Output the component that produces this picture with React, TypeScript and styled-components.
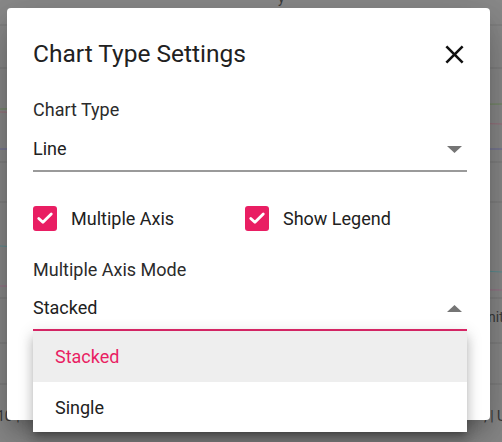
import React from "react";
import styled, { createGlobalStyle } from "styled-components";

const Global = createGlobalStyle`
  html, body { margin: 0; padding: 0; background: #8a8a8a; }
  body { font-family: Roboto, "Noto Sans", "Liberation Sans", sans-serif; }
  * { box-sizing: border-box; }
`;

const Page = styled.div`
  position: relative;
  width: 502px;
  height: 442px;
  overflow: hidden;
  background: #8a8a8a;
`;

const ChartCanvas = styled.svg`
  position: absolute;
  inset: 0;
  width: 502px;
  height: 442px;
`;

const Backdrop = styled.div`
  position: absolute;
  inset: 0;
  padding: 8px 0 0 7px;
`;

const Dialog = styled.div`
  width: 483px;
  height: 412px;
  background: #fff;
  border-radius: 4px;
  box-shadow: 0 11px 15px -7px rgba(0,0,0,0.2), 0 24px 38px 3px rgba(0,0,0,0.14), 0 9px 46px 8px rgba(0,0,0,0.12);
  padding: 26px 24px 0 26px;
  display: flex;
  flex-direction: column;
`;

const TitleRow = styled.div`
  height: 40px;
  display: flex;
  align-items: center;
  justify-content: space-between;
`;

const Title = styled.h2`
  margin: 0;
  font-size: 24.5px;
  line-height: 32px;
  font-weight: 400;
  color: #212121;
`;

const CloseButton = styled.button`
  width: 32px;
  height: 32px;
  margin-right: -4px;
  border: none;
  background: transparent;
  padding: 0;
  display: flex;
  align-items: center;
  justify-content: center;
  color: #111;
`;

const Field = styled.div<{ $top: number }>`
  position: relative;
  margin-top: ${(p) => p.$top}px;
  width: 434px;
`;

const Label = styled.div`
  height: 24px;
  line-height: 24px;
  font-size: 18px;
  color: #2b2b2b;
`;

const SelectBox = styled.div<{ $focused?: boolean }>`
  margin-top: ${(p) => (p.$focused ? 14 : 15)}px;
  height: 35px;
  padding-bottom: 9px;
  display: flex;
  align-items: center;
  justify-content: space-between;
  border-bottom: 2px solid ${(p) => (p.$focused ? "#e0286a" : "#9a9a9a")};
  font-size: 18px;
  color: #212121;
`;

const Value = styled.span`
  line-height: 24px;
`;

const Arrow = styled.svg`
  width: 15px;
  height: 7px;
  margin-right: 5px;
  flex: none;
`;

const CheckRow = styled.div`
  margin-top: 33px;
  height: 26px;
  display: grid;
  grid-template-columns: 212px 1fr;
  align-items: center;
`;

const CheckItem = styled.label`
  display: flex;
  align-items: center;
  gap: 14px;
  font-size: 18px;
  color: #212121;
`;

const Box = styled.span`
  width: 24px;
  height: 25px;
  border-radius: 3px;
  background: #e91e63;
  display: flex;
  align-items: center;
  justify-content: center;
`;

const Menu = styled.ul`
  position: absolute;
  left: 0;
  top: 100%;
  width: 434px;
  margin: 0;
  padding: 0;
  list-style: none;
  background: #fff;
  box-shadow: 0 5px 5px -3px rgba(0,0,0,0.2), 0 8px 10px 1px rgba(0,0,0,0.14), 0 3px 14px 2px rgba(0,0,0,0.12);
  z-index: 2;
`;

const MenuItem = styled.li<{ $selected?: boolean; $h: number }>`
  height: ${(p) => p.$h}px;
  padding: 0 22px;
  display: flex;
  align-items: center;
  font-size: 18px;
  background: ${(p) => (p.$selected ? "#eeeeee" : "#fff")};
  color: ${(p) => (p.$selected ? "#e91e63" : "#212121")};
`;

const DropArrow = ({ up }: { up?: boolean }) => (
  <Arrow viewBox="0 0 15 7">
    {up ? <path d="M0 7 L7.5 0 L15 7 Z" fill="#757575" /> : <path d="M0 0 L15 0 L7.5 7 Z" fill="#757575" />}
  </Arrow>
);

const Check = () => (
  <svg width="20" height="20" viewBox="0 0 24 24">
    <path d="M4.5 12.5 L9.5 17.2 L19.5 7.2" fill="none" stroke="#fff" strokeWidth="3.4" strokeLinecap="round" strokeLinejoin="round" />
  </svg>
);

const gridY = [25, 68, 162, 202, 298, 343, 384];

export default function App() {
  return (
    <Page>
      <Global />
      <ChartCanvas viewBox="0 0 502 442">
        {gridY.map((y) => (
          <line key={y} x1="0" x2="502" y1={y} y2={y} stroke="#7b7b7b" strokeWidth="1" />
        ))}
        <line x1="0" x2="502" y1="109" y2="104" stroke="#6e8a5c" strokeWidth="1.2" />
        <line x1="0" x2="502" y1="112" y2="124" stroke="#9a6f7c" strokeWidth="1" />
        <line x1="0" x2="502" y1="149" y2="149" stroke="#6a6a9a" strokeWidth="1" />
        <line x1="0" x2="502" y1="246" y2="272" stroke="#5e8e92" strokeWidth="1" />
        <line x1="0" x2="502" y1="286" y2="290" stroke="#9a6f88" strokeWidth="1" />
        <text x="278" y="3" fontSize="14" fill="#3a3a3a" fontFamily="Roboto">y</text>
        <text x="488" y="322" fontSize="14" fill="#3a3a3a" fontFamily="Roboto">nit</text>
        <text x="-3" y="421" fontSize="14" fill="#3a3a3a" fontFamily="Roboto">10 |</text>
        <text x="484" y="421" fontSize="14" fill="#3a3a3a" fontFamily="Roboto">, | U</text>
      </ChartCanvas>
      <Backdrop>
        <Dialog>
          <TitleRow>
            <Title>Chart Type Settings</Title>
            <CloseButton aria-label="close">
              <svg width="31" height="31" viewBox="0 0 24 24">
                <path fill="#111" d="M19 6.41L17.59 5 12 10.59 6.41 5 5 6.41 10.59 12 5 17.59 6.41 19 12 13.41 17.59 19 19 17.59 13.41 12z" />
              </svg>
            </CloseButton>
          </TitleRow>
          <Field $top={24}>
            <Label>Chart Type</Label>
            <SelectBox>
              <Value>Line</Value>
              <DropArrow />
            </SelectBox>
          </Field>
          <CheckRow>
            <CheckItem>
              <Box><Check /></Box>
              Multiple Axis
            </CheckItem>
            <CheckItem>
              <Box><Check /></Box>
              Show Legend
            </CheckItem>
          </CheckRow>
          <Field $top={27}>
            <Label>Multiple Axis Mode</Label>
            <SelectBox $focused>
              <Value>Stacked</Value>
              <DropArrow up />
            </SelectBox>
            <Menu>
              <MenuItem $selected $h={51}>Stacked</MenuItem>
              <MenuItem $h={50}>Single</MenuItem>
            </Menu>
          </Field>
        </Dialog>
      </Backdrop>
    </Page>
  );
}
